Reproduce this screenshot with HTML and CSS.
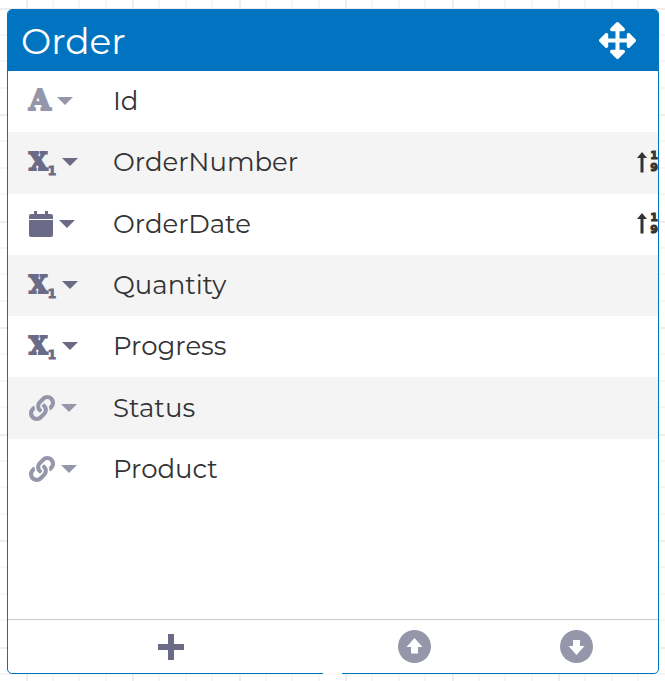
FILE: index.html
```html
<!DOCTYPE html>
<html lang="en">
<head>
    <meta charset="UTF-8">
    <meta name="viewport" content="width=device-width, initial-scale=1.0">
    <title>Order</title>
    <link rel="stylesheet" href="styles.css">
</head>
<body>
    <!-- Canvas grid -->
    <svg class="canvas-grid" aria-hidden="true">
        <defs>
            <pattern id="grid" x="26" y="8" width="213" height="213" patternUnits="userSpaceOnUse">
                <path class="grid-minor" d="M27 0v213M53 0v213M80 0v213M133 0v213M160 0v213M186 0v213M0 27h213M0 53h213M0 80h213M0 133h213M0 160h213M0 186h213"/>
                <path class="grid-major" d="M1 0v213M107 0v213M0 1h213M0 107h213"/>
            </pattern>
        </defs>
        <rect width="100%" height="100%" fill="url(#grid)"/>
    </svg>

    <!-- Shared icons -->
    <svg class="icon-defs" aria-hidden="true">
        <symbol id="caret" viewBox="0 0 16 8">
            <path d="M0 0h16L8 8z"/>
        </symbol>
        <symbol id="link" viewBox="0 0 512 512">
            <path d="M326.612 185.391c59.747 59.809 58.927 155.698.36 214.59-.11.12-.24.25-.36.37l-67.2 67.2c-59.27 59.27-155.699 59.262-214.96 0-59.27-59.26-59.27-155.7 0-214.96l37.106-37.106c9.84-9.84 26.786-3.3 27.294 10.606.648 17.722 3.826 35.527 9.69 52.721 1.986 5.822.567 12.262-3.783 16.612l-13.087 13.087c-28.026 28.026-28.905 73.66-1.155 101.96 28.024 28.579 74.086 28.749 102.325.51l67.2-67.19c28.191-28.191 28.073-73.757 0-101.83-3.701-3.694-7.429-6.564-10.341-8.569a16.037 16.037 0 0 1-6.947-12.606c-.396-10.567 3.348-21.456 11.698-29.806l21.054-21.055c5.521-5.521 14.182-6.199 20.584-1.731a152.482 152.482 0 0 1 20.522 17.197zM467.547 44.449c-59.261-59.262-155.69-59.27-214.96 0l-67.2 67.2c-.12.12-.25.25-.36.37-58.566 58.892-59.387 154.781.36 214.59a152.454 152.454 0 0 0 20.521 17.196c6.402 4.468 15.064 3.789 20.584-1.731l21.054-21.055c8.35-8.35 12.094-19.239 11.698-29.806a16.037 16.037 0 0 0-6.947-12.606c-2.912-2.005-6.64-4.875-10.341-8.569-28.073-28.073-28.191-73.639 0-101.83l67.2-67.19c28.239-28.239 74.3-28.069 102.325.51 27.75 28.3 26.872 73.934-1.155 101.96l-13.087 13.087c-4.35 4.35-5.769 10.79-3.783 16.612 5.864 17.194 9.042 34.999 9.69 52.721.509 13.906 17.454 20.446 27.294 10.606l37.106-37.106c59.271-59.259 59.271-155.699.001-214.959z"/>
        </symbol>
        <symbol id="arrow-up" viewBox="0 0 10 21">
            <path d="M5 0l5 6H6.500v14.500H3.500V6H0z"/>
        </symbol>
    </svg>

    <div class="entity">
        <header class="entity-header">
            <h1>Order</h1>
            <button class="move" type="button" aria-label="Move">
                <svg viewBox="0 0 512 512"><path d="M352.201 425.775l-79.196 79.196c-9.373 9.373-24.568 9.373-33.941 0l-79.196-79.196c-15.119-15.119-4.411-40.971 16.971-40.970h51.162L228 284H127.196v51.162c0 21.382-25.851 32.090-40.971 16.971L7.029 272.937c-9.373-9.373-9.373-24.569 0-33.941L86.225 159.800c15.119-15.119 40.971-4.411 40.971 16.971V228H228V127.196h-51.230c-21.382 0-32.090-25.851-16.971-40.971l79.196-79.196c9.373-9.373 24.568-9.373 33.941 0l79.196 79.196c15.119 15.119 4.411 40.971-16.971 40.971h-51.162V228h100.804v-51.162c0-21.382 25.851-32.090 40.971-16.971l79.196 79.196c9.373 9.373 9.373 24.569 0 33.941L425.775 352.200c-15.119 15.119-40.971 4.411-40.971-16.971V284H284v100.804h51.230c21.382 0 32.090 25.851 16.971 40.971z"/></svg>
            </button>
        </header>

        <ul class="fields">
            <li class="field">
                <button class="type light" type="button" aria-label="Type of Id">
                    <span class="type-text">A</span>
                    <svg class="caret"><use href="#caret"/></svg>
                </button>
                <span class="name">Id</span>
            </li>
            <li class="field">
                <button class="type" type="button" aria-label="Type of OrderNumber">
                    <span class="type-number">X<sub>1</sub></span>
                    <svg class="caret"><use href="#caret"/></svg>
                </button>
                <span class="name">OrderNumber</span>
                <span class="sort">
                    <svg><use href="#arrow-up"/></svg>
                    <span class="sort-digits"><span>1</span><span>9</span></span>
                </span>
            </li>
            <li class="field">
                <button class="type" type="button" aria-label="Type of OrderDate">
                    <svg class="type-date" viewBox="0 0 24 26"><path d="M5 0h3v3h8V0h3v3h3q2 0 2 2v3H0V5q0-2 2-2h3zM0 9h24v15q0 2-2 2H2q-2 0-2-2z"/></svg>
                    <svg class="caret"><use href="#caret"/></svg>
                </button>
                <span class="name">OrderDate</span>
                <span class="sort">
                    <svg><use href="#arrow-up"/></svg>
                    <span class="sort-digits"><span>1</span><span>9</span></span>
                </span>
            </li>
            <li class="field">
                <button class="type" type="button" aria-label="Type of Quantity">
                    <span class="type-number">X<sub>1</sub></span>
                    <svg class="caret"><use href="#caret"/></svg>
                </button>
                <span class="name">Quantity</span>
            </li>
            <li class="field">
                <button class="type" type="button" aria-label="Type of Progress">
                    <span class="type-number">X<sub>1</sub></span>
                    <svg class="caret"><use href="#caret"/></svg>
                </button>
                <span class="name">Progress</span>
            </li>
            <li class="field">
                <button class="type light" type="button" aria-label="Type of Status">
                    <svg class="type-link"><use href="#link"/></svg>
                    <svg class="caret"><use href="#caret"/></svg>
                </button>
                <span class="name">Status</span>
            </li>
            <li class="field">
                <button class="type light" type="button" aria-label="Type of Product">
                    <svg class="type-link"><use href="#link"/></svg>
                    <svg class="caret"><use href="#caret"/></svg>
                </button>
                <span class="name">Product</span>
            </li>
        </ul>

        <footer class="entity-footer">
            <button class="add" type="button" aria-label="Add field">
                <svg viewBox="0 0 26 26"><path d="M10 0h6v10h10v6H16v10h-6V16H0v-6h10z"/></svg>
            </button>
            <button class="order" type="button" aria-label="Move up">
                <svg viewBox="0 0 33 33"><circle cx="16.500" cy="16.500" r="16.500"/><path class="arrow" d="M16.500 8l8 9H20v6.500h-7V17H8.500z"/></svg>
            </button>
            <button class="order" type="button" aria-label="Move down">
                <svg viewBox="0 0 33 33"><circle cx="16.500" cy="16.500" r="16.500"/><path class="arrow" d="M16.500 25l8-9H20V10h-7v6H8.500z"/></svg>
            </button>
        </footer>
        <div class="resize"></div>
    </div>
</body>
</html>
```

FILE: styles.css
```css
* {
    box-sizing: border-box;
}

body {
    margin: 0;
    padding: 9px 6px 7px 7px;
    min-height: 100vh;
    display: flex;
    background: #fff;
    color: #333;
    font-family: Montserrat, 'DejaVu Sans', sans-serif;
}

button {
    display: flex;
    align-items: center;
    padding: 0;
    border: 0;
    background: none;
    color: inherit;
    cursor: pointer;
}

svg {
    display: block;
    flex: none;
    fill: currentColor;
}

.canvas-grid {
    position: absolute;
    top: 0;
    left: 0;
    width: 100%;
    height: 100%;
}

.grid-minor {
    stroke: #f6f6f6;
    stroke-width: 2;
}

.grid-major {
    stroke: #eee;
    stroke-width: 2;
}

.icon-defs {
    position: absolute;
    width: 0;
    height: 0;
}

.entity {
    position: relative;
    flex: 1;
    display: flex;
    flex-direction: column;
    background: #fff;
    border: 1px solid #0074c0;
    border-radius: 5px;
}

.entity-header {
    display: flex;
    align-items: center;
    justify-content: space-between;
    height: 61px;
    padding: 0 22px 0 13px;
    background: #0074c0;
    border-radius: 4px 4px 0 0;
    color: #fff;
}

.entity-header h1 {
    margin: 0;
    font-size: 36px;
    font-weight: normal;
    line-height: 42px;
}

.move svg {
    width: 37px;
    height: 37px;
}

.fields {
    display: flex;
    flex-direction: column;
    min-height: 429px;
    margin: 0;
    padding: 0;
    list-style: none;
}

.field {
    flex: 1;
    display: flex;
    align-items: center;
    padding: 0 0 1px 21px;
}

.field:nth-child(even) {
    background: #f4f4f4;
}

.type {
    gap: 6px;
    width: 84px;
    color: #6b6b87;
}

.light {
    color: #9696aa;
}

.type-text,
.type-number {
    font-family: 'DejaVu Serif', serif;
    font-weight: bold;
    line-height: 30px;
    -webkit-text-stroke: 2px currentColor;
}

.type-text {
    font-size: 28px;
}

.type-number {
    display: flex;
    font-size: 24px;
}

.type-number sub {
    align-self: flex-end;
    font-family: 'DejaVu Sans', sans-serif;
    font-size: 12px;
    line-height: 12px;
    -webkit-text-stroke: 1px currentColor;
}

.type-date {
    width: 24px;
    height: 26px;
}

.type-link {
    width: 26px;
    height: 26px;
}

.caret {
    width: 16px;
    height: 8px;
}

.name {
    flex: 1;
    font-size: 26px;
}

.sort {
    display: flex;
    align-items: center;
    gap: 3px;
}

.sort svg {
    width: 10px;
    height: 21px;
}

.sort-digits {
    display: flex;
    flex-direction: column;
    font-family: 'DejaVu Sans', sans-serif;
    font-size: 11px;
    font-weight: bold;
    line-height: 12px;
    -webkit-text-stroke: 1px currentColor;
}

.entity-footer {
    display: grid;
    grid-template-columns: 2fr 1fr 1fr;
    height: 54px;
    margin-top: auto;
    border-top: 1px solid #ccc;
}

.entity-footer button {
    justify-content: center;
}

.add {
    color: #6b6b87;
}

.add svg {
    width: 26px;
    height: 26px;
}

.order {
    color: #9696aa;
}

.order svg {
    width: 33px;
    height: 33px;
}

.arrow {
    fill: #fff;
}

/* Resize handle sits on the bottom border */
.resize {
    position: absolute;
    bottom: -1px;
    left: calc(50% - 10px);
    width: 19px;
    height: 1px;
    background: #fff;
    cursor: ns-resize;
}
```
